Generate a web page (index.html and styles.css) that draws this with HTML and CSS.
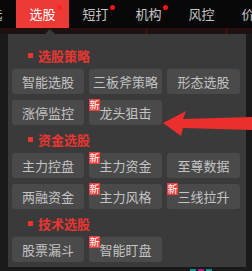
FILE: index.html
```html
<!doctype html>
<html>
<head>
<meta charset="utf-8">
<link rel="stylesheet" href="styles.css">
</head>
<body>
<div class="nav">
  <div class="tab">自选</div>
  <div class="tab active">选股<span class="dot"></span></div>
  <div class="tab">短打<span class="dot"></span></div>
  <div class="tab">机构<span class="dot"></span></div>
  <div class="tab">风控</div>
  <div class="tab">价值</div>
</div>
<div class="strip">
  <span class="caret"></span>
</div>
<div class="stage">
  <div class="panel">
    <div class="head"><span class="sq"></span>选股策略</div>
    <div class="grid">
      <div class="btn">智能选股</div>
      <div class="btn">三板斧策略</div>
      <div class="btn">形态选股</div>
      <div class="btn">涨停监控</div>
      <div class="btn"><span class="new">新</span>龙头狙击</div>
    </div>
    <div class="head"><span class="sq"></span>资金选股</div>
    <div class="grid">
      <div class="btn">主力控盘</div>
      <div class="btn"><span class="new">新</span>主力资金</div>
      <div class="btn">至尊数据</div>
      <div class="btn">两融资金</div>
      <div class="btn"><span class="new">新</span>主力风格</div>
      <div class="btn"><span class="new">新</span>三线拉升</div>
    </div>
    <div class="head"><span class="sq"></span>技术选股</div>
    <div class="grid">
      <div class="btn">股票漏斗</div>
      <div class="btn"><span class="new">新</span>智能盯盘</div>
    </div>
  </div>
</div>
<div class="foot">
  <span class="mark teal"></span><span class="mark pink"></span><span class="mark teal"></span>
</div>
<svg class="arrow" viewBox="0 0 252 271" width="252" height="271">
  <polygon points="163,123 186,111 183,119 252,117 252,130 183,128 181,136" fill="#ea2f2c"/>
</svg>
</body>
</html>
```

FILE: styles.css
```css
body {
    margin: 0;
    width: 252px;
    height: 271px;
    overflow: hidden;
    background: #1a1a1a;
    font-family: "Noto Sans CJK SC", "Noto Sans", sans-serif;
    position: relative;
}
.nav {
    display: flex;
    height: 28px;
    margin-left: -37px;
    background: #080808;
}
.tab {
    flex: none;
    width: 53px;
    line-height: 28px;
    text-align: center;
    font-size: 13px;
    color: #c6c6c6;
    position: relative;
}
.tab.active {
    background: #ec3a36;
    color: #fff;
}
.dot {
    position: absolute;
    top: 5px;
    right: 7px;
    width: 5px;
    height: 5px;
    border-radius: 50%;
    background: #ff1010;
}
.tab.active .dot {
    background: #ff2222;
}
.strip {
    height: 6px;
    background: #1b1212;
    border-top: 1px solid #3a0808;
    box-sizing: border-box;
    position: relative;
    background-image: linear-gradient(to right, transparent 146px, #6a0c0c 146px, #6a0c0c 147px, transparent 147px, transparent 226px, #6a0c0c 226px, #6a0c0c 227px, transparent 227px);
}
.caret {
    position: absolute;
    left: 45px;
    bottom: 0;
    width: 0;
    height: 0;
    border-left: 5px solid transparent;
    border-right: 5px solid transparent;
    border-bottom: 5px solid #3a3a3a;
}
.stage {
    padding-left: 8px;
}
.panel {
    width: 238px;
    box-sizing: border-box;
    background: #3a3a3a;
    padding: 7px 6px 5px 4px;
}
.head {
    height: 28px;
    display: flex;
    align-items: center;
    padding-left: 16px;
    font-size: 13px;
    font-weight: bold;
    color: #ec3531;
}
.sq {
    width: 5px;
    height: 5px;
    background: #ec3531;
    margin-right: 5px;
}
.grid {
    display: grid;
    grid-template-columns: 72px 73px 73px;
    column-gap: 5px;
    row-gap: 6px;
}
.btn {
    height: 25px;
    line-height: 25px;
    border-radius: 3px;
    background: #4a4a4a;
    color: #c4c4c4;
    font-size: 13px;
    text-align: center;
    position: relative;
    white-space: nowrap;
}
.new {
    position: absolute;
    left: 0;
    top: -1px;
    width: 11px;
    height: 12px;
    line-height: 12px;
    background: #e8403c;
    color: #fff;
    font-size: 10px;
    text-align: center;
}
.foot {
    display: flex;
    padding: 2px 0 0 190px;
}
.mark {
    width: 6px;
    height: 2px;
    margin-right: 2px;
}
.teal { background: #1a8c8c; }
.pink { background: #a0208c; }
.arrow {
    position: absolute;
    left: 0;
    top: 0;
}
```
